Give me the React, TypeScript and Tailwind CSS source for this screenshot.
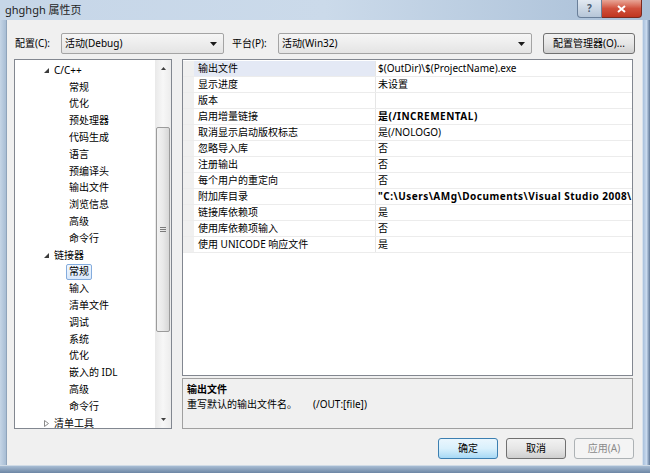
import React from 'react'

const ui = "font-['Noto_Sans','Noto_Sans_CJK_SC',sans-serif]"

type Node = { level: number; text: string; open?: boolean; closed?: boolean; selected?: boolean }

const tree: Node[] = [
  { level: 1, text: 'C/C++', open: true },
  { level: 2, text: '常规' },
  { level: 2, text: '优化' },
  { level: 2, text: '预处理器' },
  { level: 2, text: '代码生成' },
  { level: 2, text: '语言' },
  { level: 2, text: '预编译头' },
  { level: 2, text: '输出文件' },
  { level: 2, text: '浏览信息' },
  { level: 2, text: '高级' },
  { level: 2, text: '命令行' },
  { level: 1, text: '链接器', open: true },
  { level: 2, text: '常规', selected: true },
  { level: 2, text: '输入' },
  { level: 2, text: '清单文件' },
  { level: 2, text: '调试' },
  { level: 2, text: '系统' },
  { level: 2, text: '优化' },
  { level: 2, text: '嵌入的 IDL' },
  { level: 2, text: '高级' },
  { level: 2, text: '命令行' },
  { level: 1, text: '清单工具', closed: true },
]

const props: [string, string, boolean?][] = [
  ['输出文件', '$(OutDir)\\$(ProjectName).exe'],
  ['显示进度', '未设置'],
  ['版本', ''],
  ['启用增量链接', '是(/INCREMENTAL)', true],
  ['取消显示启动版权标志', '是(/NOLOGO)'],
  ['忽略导入库', '否'],
  ['注册输出', '否'],
  ['每个用户的重定向', '否'],
  ['附加库目录', '"C:\\Users\\AMg\\Documents\\Visual Studio 2008\\Projects\\ghghgh\\lib"', true],
  ['链接库依赖项', '是'],
  ['使用库依赖项输入', '否'],
  ['使用 UNICODE 响应文件', '是'],
]

function DropArrow() {
  return (
    <svg width="7" height="4" viewBox="0 0 7 4" className="shrink-0">
      <polygon points="0,0 7,0 3.5,4" fill="#1a1a1a" />
    </svg>
  )
}

function Combo({ w, text }: { w: string; text: string }) {
  return (
    <div className={`${w} h-full flex items-center justify-between pl-[3px] pr-[6px] border border-[#a4a4a4] rounded-[2px] bg-linear-to-b from-[#f6f6f6] to-[#e4e4e4]`}>
      <span>{text}</span>
      <DropArrow />
    </div>
  )
}

function TreeRow({ n }: { n: Node }) {
  return (
    <div className="h-[16.8px] flex items-center shrink-0 whitespace-nowrap">
      {n.level === 1 ? (
        <>
          <div className="w-[29px]" />
          <div className="w-[10px] flex items-center">
            {n.open && (
              <svg width="5" height="5" viewBox="0 0 5 5">
                <polygon points="5,0 5,5 0,5" fill="#3c3c3c" />
              </svg>
            )}
            {n.closed && (
              <svg width="5" height="7" viewBox="0 0 5 7">
                <polygon points="0.5,0.5 4.5,3.5 0.5,6.5" fill="none" stroke="#8a8a8a" strokeWidth="1" />
              </svg>
            )}
          </div>
          <span>{n.text}</span>
        </>
      ) : (
        <>
          <div className={n.selected ? 'w-[51px]' : 'w-[54px]'} />
          {n.selected ? (
            <span className="px-[2px] h-[16px] flex items-center border border-[#84acdd] rounded-[2px] bg-linear-to-b from-[#f1f7fe] to-[#d9e8fb]">{n.text}</span>
          ) : (
            <span>{n.text}</span>
          )}
        </>
      )}
    </div>
  )
}

function Scrollbar() {
  return (
    <div className="w-[16px] h-full flex flex-col bg-linear-to-r from-[#e9e9e9] via-[#f7f7f7] to-[#ececec]">
      <div className="h-[17px] flex items-center justify-center shrink-0">
        <svg width="5" height="3" viewBox="0 0 5 3">
          <polygon points="0,3 5,3 2.5,0" fill="#404040" />
        </svg>
      </div>
      <div className="flex-1 flex flex-col">
        <div className="h-[50px] shrink-0" />
        <div className="h-[205px] mx-[1px] rounded-[2px] border border-[#9b9b9b] bg-linear-to-r from-[#f2f2f2] via-[#e9e9e9] to-[#d6d6d6] flex flex-col items-center justify-center gap-[1px]">
          <div className="w-[6px] h-px bg-[#7a7a7a]" />
          <div className="w-[6px] h-px bg-[#7a7a7a]" />
          <div className="w-[6px] h-px bg-[#7a7a7a]" />
        </div>
      </div>
      <div className="h-[17px] flex items-center justify-center shrink-0">
        <svg width="5" height="3" viewBox="0 0 5 3">
          <polygon points="0,0 5,0 2.5,3" fill="#404040" />
        </svg>
      </div>
    </div>
  )
}

function DlgButton({ text, kind }: { text: string; kind: 'default' | 'normal' | 'disabled' }) {
  const cls =
    kind === 'default'
      ? 'border-[#3c7fb1] bg-linear-to-b from-[#eaf6fd] via-[#d9f0fc] to-[#a7d9f5] text-black'
      : kind === 'normal'
      ? 'border-[#707070] bg-linear-to-b from-[#f2f2f2] via-[#e6e6e6] to-[#cfcfcf] text-black'
      : 'border-[#adb2b5] bg-[#f4f4f4] text-[#8a8a8a]'
  return (
    <div className={`w-[60px] h-full flex items-center justify-center border rounded-[3px] ${cls}`}>{text}</div>
  )
}

export default function App() {
  return (
    <div className={`${ui} w-[650px] h-[473px] flex flex-col bg-[#b6c9de] text-[10px] text-black overflow-hidden`}>
      {/* title bar */}
      <div className="h-[20px] flex items-start bg-linear-to-r from-[#c6d6e8] via-[#cbdaea] to-[#a9bfd7] shrink-0">
        <div className="flex-1 h-full flex items-center pl-[5px] text-[11px] text-[#1e1e1e]">ghghgh 属性页</div>
        <div className="w-[25px] h-[18px] flex items-center justify-center rounded-bl-[4px] border border-t-0 border-[#6a7f99] bg-linear-to-b from-[#e2e9f1] to-[#b6c6d8] text-[10px] font-bold text-[#4a5a70]">?</div>
        <div className="w-[40px] h-[18px] mr-[8px] flex items-center justify-center rounded-br-[4px] border border-t-0 border-l-0 border-[#7a2a20] bg-linear-to-b from-[#e7a597] via-[#d0503c] to-[#c03520] text-white text-[11px] font-bold">
          <svg width="9" height="8" viewBox="0 0 9 8">
            <path d="M1 1 L8 7 M8 1 L1 7" stroke="#ffffff" strokeWidth="2" />
          </svg>
        </div>
      </div>

      <div className="h-[445px] flex shrink-0">
        <div className="w-[7px] h-full bg-linear-to-r from-[#c5d5e6] to-[#a8bdd4] border-r border-[#8fa4bb]" />

        {/* client area */}
        <div className="w-[635px] h-full bg-[#f0f0f0] flex flex-col pt-[13px]">
          <div className="h-[21px] flex items-center pl-[8px] shrink-0">
            <div className="w-[46px]">配置(C):</div>
            <Combo w="w-[163px]" text="活动(Debug)" />
            <div className="w-[46px] ml-[8px]">平台(P):</div>
            <Combo w="w-[254px]" text="活动(Win32)" />
            <div className="w-[92px] h-full ml-[11px] flex items-center justify-center border border-[#707070] rounded-[3px] bg-linear-to-b from-[#f2f2f2] via-[#e6e6e6] to-[#d0d0d0]">
              配置管理器(O)...
            </div>
          </div>

          <div className="h-[370px] mt-[5px] flex gap-[10px] pl-[7px] shrink-0">
            {/* tree */}
            <div className="w-[158px] h-full border border-[#828790] bg-white flex">
              <div className="flex-1 overflow-hidden flex flex-col pt-[2px]">
                {tree.map((n, i) => (
                  <TreeRow key={i} n={n} />
                ))}
              </div>
              <Scrollbar />
            </div>

            {/* property grid + description */}
            <div className="w-[451px] h-full flex flex-col gap-[2px]">
              <div className="h-[317px] border border-[#828790] bg-white flex flex-col pt-[1px] shrink-0">
                {props.map(([name, value, bold], i) => (
                  <div key={i} className="h-[16px] flex border-b border-[#ececec] shrink-0">
                    <div className="w-[11px] bg-[#f0f0f0]" />
                    <div className={`w-[181px] flex items-center pl-[4px] whitespace-nowrap ${i === 0 ? 'bg-[#e4e9f5]' : ''}`}>{name}</div>
                    <div className="w-px bg-[#e6e6e6]" />
                    <div className={`flex-1 flex items-center pl-[2px] whitespace-nowrap overflow-hidden ${bold ? 'font-bold tracking-[0.5px]' : ''}`}>{value}</div>
                  </div>
                ))}
              </div>
              <div className="flex-1 border border-[#a0a0a0] bg-[#f0f0f0] pl-[4px] pt-[4px] flex flex-col gap-[2px] leading-[13px]">
                <div className="font-bold">输出文件</div>
                <div className="flex">
                  <span className="w-[126px]">重写默认的输出文件名。</span>
                  <span>(/OUT:[file])</span>
                </div>
              </div>
            </div>
          </div>

          <div className="h-[21px] mt-[9px] flex justify-end gap-[8px] pr-[8px] shrink-0">
            <DlgButton text="确定" kind="default" />
            <DlgButton text="取消" kind="normal" />
            <DlgButton text="应用(A)" kind="disabled" />
          </div>
        </div>

        <div className="w-[8px] h-full bg-linear-to-r from-[#a8c0dc] via-[#c9daee] to-[#5f7898] border-l border-[#d8e2ec]" />
      </div>

      <div className="h-[8px] bg-linear-to-b from-[#a8bdd4] to-[#6d86a4] border-t border-[#d0dbe6] shrink-0" />
    </div>
  )
}
